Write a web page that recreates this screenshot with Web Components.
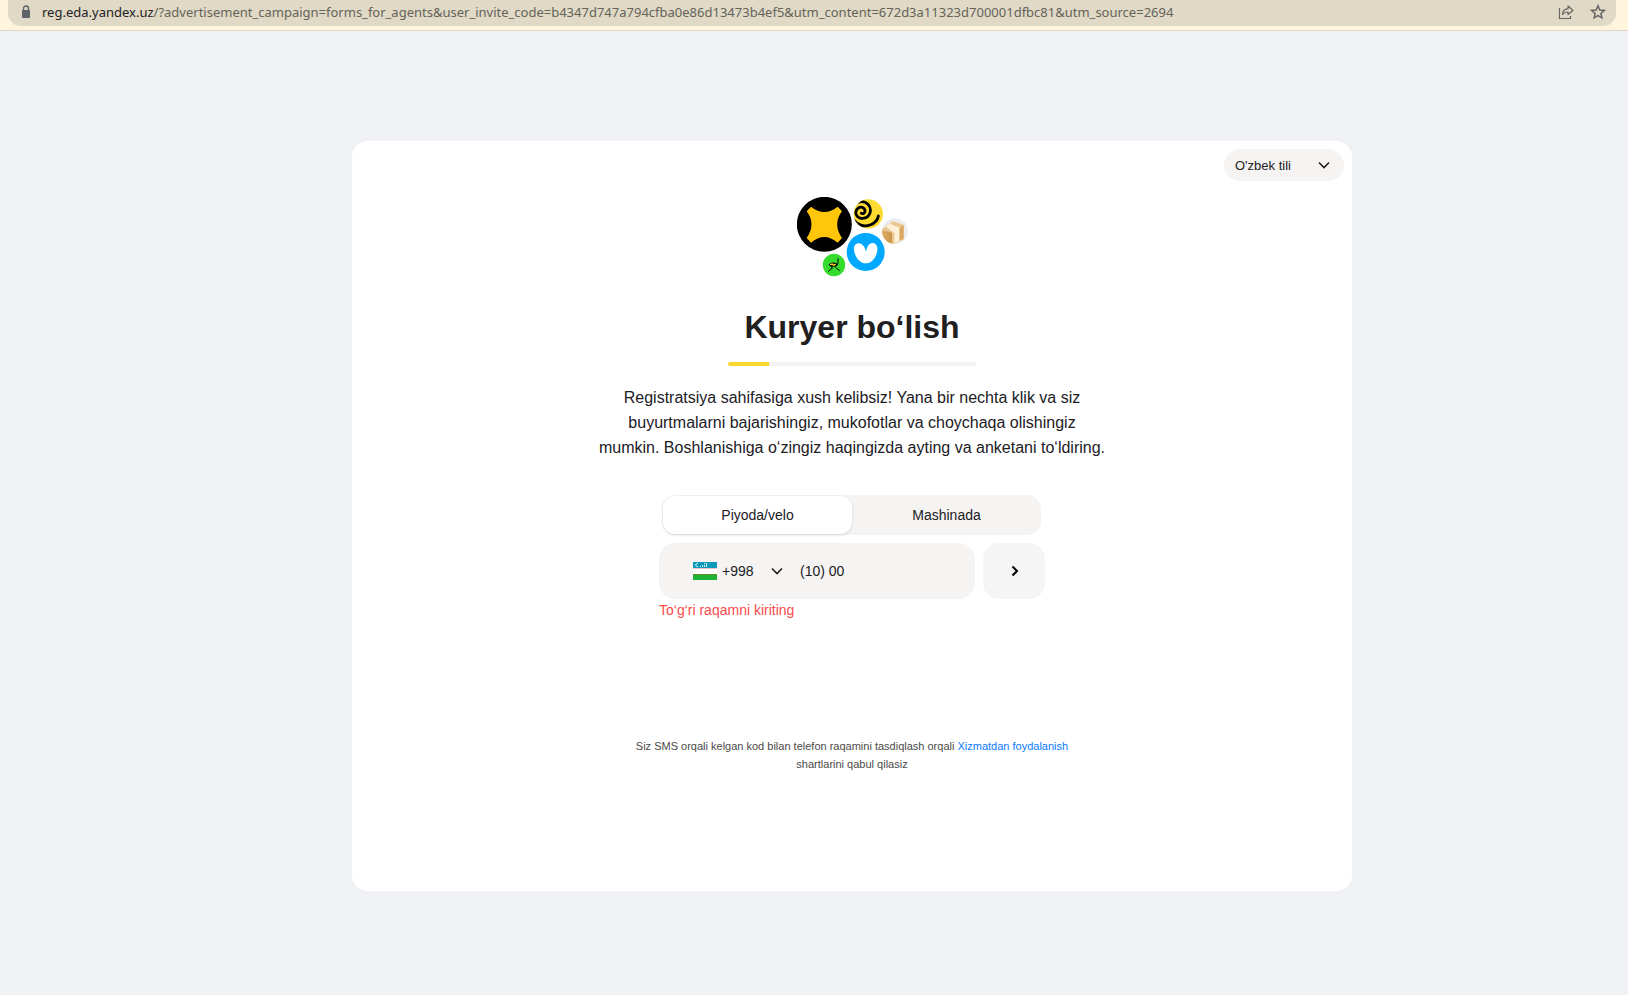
<!DOCTYPE html>
<html lang="uz">
<head>
<meta charset="utf-8">
<title>Kuryer bo‘lish</title>
<style>
body{margin:0;background:#f0f1f5;font-family:"Liberation Sans",Arial,sans-serif;color:#21201f}
</style>
</head>
<body>
<app-page></app-page>
<script>
const define = (name, html, setup) => customElements.define(name, class extends HTMLElement {
  constructor() {
    super();
    const t = document.createElement('template');
    t.innerHTML = '<style>*{box-sizing:border-box}</style>' + html;
    this.attachShadow({mode: 'open'}).append(t.content.cloneNode(true));
    if (setup) setup(this.shadowRoot, this);
  }
});

define('address-bar', `
<style>
:host{display:block;height:31px;padding:0 12px 4px 8px;background:#fff4dc;border-bottom:1px solid #e0d8c4;box-sizing:border-box}
.pill{display:flex;align-items:center;height:26px;padding:0 10px 2px 12px;border-radius:0 0 13px 13px;background:#e0d9c5;color:#65635b;font:13px/24px "Noto Sans","Open Sans",sans-serif}
.lock{width:12px;height:14px;margin-right:10px}
.url{flex:1;white-space:nowrap;overflow:hidden}
b{font-weight:400;color:#202124}
button{border:0;padding:0;background:none;width:16px;height:16px;margin-left:16px;color:#666}
svg{display:block}
</style>
<div class="pill">
  <svg class="lock" viewBox="0 0 12 14"><rect x="2" y="5" width="8" height="8" rx="1" fill="#5f6368"/><path d="M3.5 6V3.5a2.5 2.5 0 0 1 5 0V6" fill="none" stroke="#5f6368" stroke-width="1.4"/></svg>
  <span class="url"><b>reg.eda.yandex.uz</b>/?advertisement_campaign=forms_for_agents&amp;user_invite_code=b4347d747a794cfba0e86d13473b4ef5&amp;utm_content=672d3a11323d700001dfbc81&amp;utm_source=2694</span>
  <button aria-label="Share"><svg viewBox="0 0 16 16" fill="none" stroke="currentColor" stroke-width="1.2"><path d="M1.500 4V14.500H12.500V12"/><path d="M4.500 10.500C5 6.500 7 4.800 10 4.700V2L15 6.500L10 10.500V8C7.500 8 6 8.500 4.500 10.500Z" stroke-linejoin="round"/></svg></button>
  <button aria-label="Bookmark"><svg viewBox="0 0 16 16" fill="none" stroke="currentColor" stroke-width="1.500"><path d="M8 1.800l1.800 4.200 4.500.4-3.400 3 1 4.400L8 11.500l-3.900 2.300 1-4.400-3.400-3 4.500-.4z"/></svg></button>
</div>`);

define('services-logo', `
<style>:host{display:block}svg{display:block;width:111px;height:80px}</style>
<svg viewBox="51 51 333 240" role="img" aria-label="Yandex">
  <defs>
    <clipPath id="y"><circle cx="265" cy="102" r="44"/></clipPath>
    <clipPath id="p"><circle cx="345" cy="153" r="39"/></clipPath>
    <linearGradient id="g" x1="0" x2="1"><stop offset="0" stop-color="#deb06c"/><stop offset="1" stop-color="#c99345"/></linearGradient>
  </defs>
  <circle cx="133" cy="133" r="82.500"/>
  <path d="M93 80Q133 112 173 80L186 94Q157 133 186 174L173 188Q133 154 93 188L80 174Q109 133 80 94Z" fill="#ffc60a"/>
  <circle cx="265" cy="102" r="44" fill="#fddb30"/>
  <g clip-path="url(#y)" fill="none" stroke="#000" stroke-width="8.500" stroke-linecap="round">
    <path d="M244 100C250 103 256 98 255 91C253 82 243 79 235 84C226 90 225 102 232 109C240 118 255 117 264 109C274 99 274 83 264 73C253 62 234 62 224 74"/>
    <path d="M219 118C232 134 252 142 270 135C284 130 293 121 295 108"/>
  </g>
  <g clip-path="url(#p)">
    <circle cx="345" cy="153" r="39" fill="#ededee"/>
    <path d="M306 148L338 124L371 134V177L340 192L306 184Z" fill="#e9c891"/>
    <path d="M306 150L336 158V192L306 184Z" fill="url(#g)"/>
    <path d="M344 156L371 134V177L344 190Z" fill="#dba964"/>
    <path d="M318 140L329 131L358 143V184L343 190V159Z" fill="#fff0d8"/>
  </g>
  <circle cx="257" cy="216" r="57" fill="#00a8ff"/>
  <path d="M258 215C254 199 246 190 236 190C222 190 219 205 224 220C230 238 243 250 257 250C274 250 286 236 291 217C295 201 289 189 277 189C267 189 261 200 258 215Z" fill="#fff"/>
  <circle cx="162" cy="255" r="33.500" fill="#35db2d"/>
  <g fill="none" stroke="#000" stroke-width="3" stroke-linejoin="round" stroke-linecap="round">
    <path d="M174 236V250L169 255M154 260L157 265L151 268L146 274M165 260L171 266L178 271"/>
    <ellipse cx="160" cy="254" rx="12" ry="5" fill="#111"/>
    <path d="M152 253L157 252L161 256L166 253" stroke="#f5d222" stroke-width="4"/>
  </g>
</svg>`);

define('chevron-select', `
<style>
:host{display:inline-grid;align-items:center}
select{grid-area:1/1;appearance:none;border:0;background:none;color:inherit;font:inherit;width:100%;height:100%;padding:0 0 0 var(--start,0px);outline:0}
svg{grid-area:1/1;justify-self:end;width:12px;height:8px;margin-right:var(--end,0px);pointer-events:none}
</style>
<select><option></option></select>
<svg viewBox="0 0 12 8" fill="none" stroke="#21201f" stroke-width="1.600"><path d="M1 1.500L6 6.500L11 1.500"/></svg>`,
(root, host) => {
  root.querySelector('option').textContent = host.getAttribute('value');
  root.querySelector('select').setAttribute('aria-label', host.getAttribute('label'));
});

define('step-progress', `
<style>
:host{display:block;width:248px;height:4px;border-radius:2px;background:#f3f3f3;overflow:hidden}
div{height:100%;width:calc(100% / 6);background:#f8d82f}
</style><div></div>`);

define('transport-tabs', `
<style>
:host{display:flex;height:40px;margin:0 4px 0 3px;padding:1px 0 1px 1px;border-radius:14px;background:#f5f4f2;font-size:14px}
label{flex:1;display:grid;place-items:center;border-radius:12px}
label:has(:checked){background:#fff;box-shadow:0 1px 3px rgba(0,0,0,.14)}
input{grid-area:1/1;appearance:none;margin:0;outline:0}
span{grid-area:1/1}
</style>
<label><input type="radio" name="t" checked><span>Piyoda/velo</span></label>
<label><input type="radio" name="t"><span>Mashinada</span></label>`);

define('phone-field', `
<style>
:host{display:grid;grid-template-columns:1fr 62px;column-gap:8px;font-size:14px}
.box{display:flex;align-items:center;height:56px;padding-left:34px;border-radius:16px;background:#f5f4f2;min-width:0}
.flag{width:24px;height:18px;margin-right:5px}
chevron-select{width:61px;height:24px;margin-right:17px}
input{flex:1;min-width:0;height:24px;border:0;padding:0;background:none;font:inherit;color:inherit;outline:0}
button{border:0;padding:0;border-radius:16px;background:#f5f5f5;display:grid;place-items:center}
button svg{width:8px;height:12px;margin-left:2px}
p{grid-column:1/-1;margin:1px 0 0;line-height:20px;color:#fa4b4b}
</style>
<div class="box">
  <svg class="flag" viewBox="0 0 24 18"><path fill="#fff" d="M0 0h24v18H0z"/><path fill="#0b99b9" d="M0 0h24v6H0z"/><path fill="#efc6c8" d="M0 6h24v1H0z"/><path fill="#668b2c" d="M0 12h24v1H0z"/><path fill="#1eb436" d="M0 13h24v5H0z"/><path d="M5 1.500A1.600 1.600 0 1 0 5 4.500" fill="none" stroke="#fff"/><path d="M7 4h1v1H7zM9 3h1v2H9zM11 1h1v1h-1zM11 3h1v2h-1zM13 1h1v4h-1z" fill="#d8f0f5"/></svg>
  <chevron-select value="+998" label="Davlat kodi"></chevron-select>
  <input type="tel" value="(10) 00" aria-label="Telefon raqami" aria-describedby="err">
</div>
<button aria-label="Davom etish"><svg viewBox="0 0 8 12" fill="none" stroke="#000" stroke-width="2"><path d="M1.500 1.500L6 6L1.500 10.500"/></svg></button>
<p id="err">To‘g‘ri raqamni kiriting</p>`);

define('signup-card', `
<style>
:host{display:flex;flex-direction:column;align-items:center;width:100%;max-width:1000px;min-height:750px;border-radius:16px;background:#fff}
header{align-self:stretch;display:flex;justify-content:flex-end;padding:8px 8px 16px}
.lang{width:120px;height:32px;border-radius:16px;background:#f5f4f2;font-size:13px;--start:11px;--end:14px}
h1{margin:30px 0 15px;font-size:32px;line-height:40px}
.intro{max-width:508px;margin:19px 0 35px;font-size:16px;line-height:25px;text-align:center}
form{display:grid;row-gap:8px;width:386px}
.terms{max-width:440px;margin:117px 0 0;font-size:11px;line-height:18px;text-align:center;color:#4b4a48}
a{color:#0a7aff;text-decoration:none}
</style>
<header><chevron-select class="lang" value="O'zbek tili" label="Til"></chevron-select></header>
<services-logo></services-logo>
<h1>Kuryer bo‘lish</h1>
<step-progress></step-progress>
<p class="intro">Registratsiya sahifasiga xush kelibsiz! Yana bir nechta klik va siz buyurtmalarni bajarishingiz, mukofotlar va choychaqa olishingiz mumkin. Boshlanishiga o‘zingiz haqingizda ayting va anketani to‘ldiring.</p>
<form><transport-tabs></transport-tabs><phone-field></phone-field></form>
<p class="terms">Siz SMS orqali kelgan kod bilan telefon raqamini tasdiqlash orqali <a href="#">Xizmatdan foydalanish</a> shartlarini qabul qilasiz</p>`);

define('app-page', `
<style>
:host{display:flex;flex-direction:column;min-height:100vh}
main{display:flex;justify-content:center;padding:110px 0 80px 76px}
</style>
<address-bar></address-bar>
<main><signup-card></signup-card></main>`);
</script>
</body>
</html>
